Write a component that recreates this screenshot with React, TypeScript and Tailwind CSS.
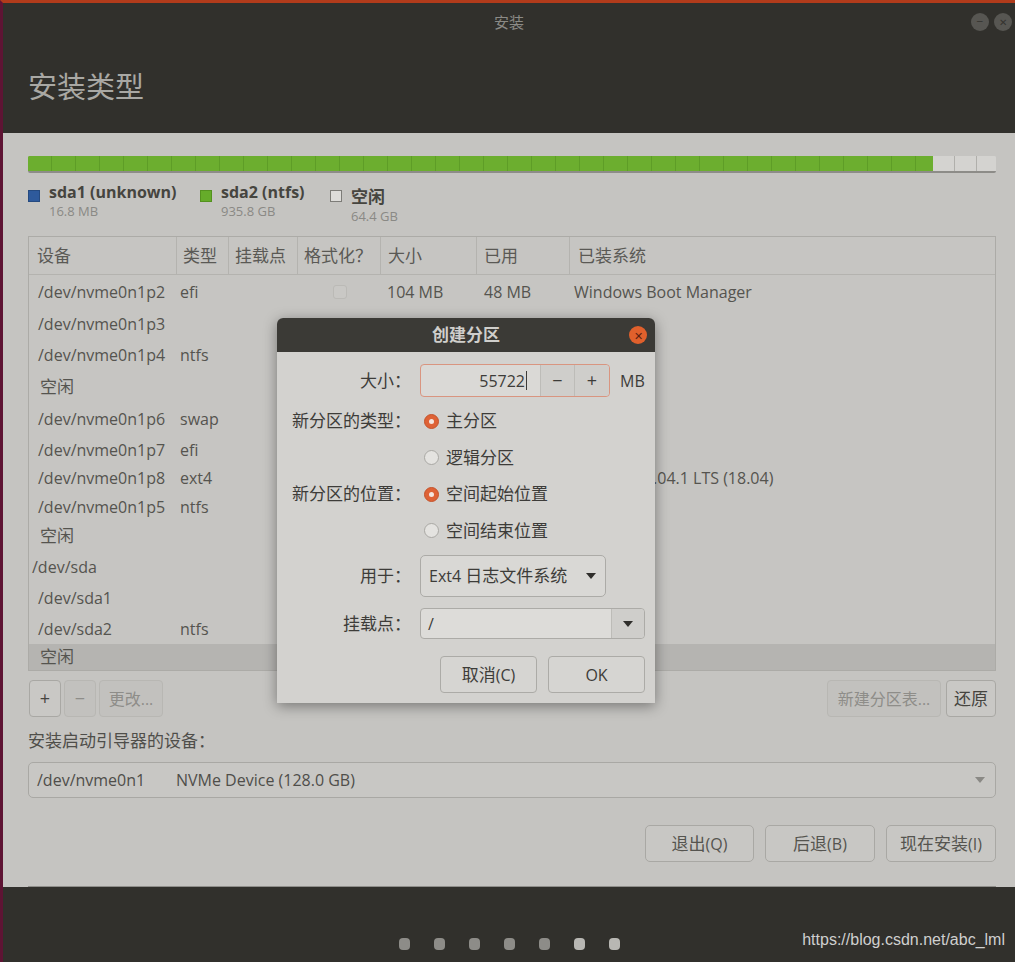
import React from 'react';

const font = "font-['Open_Sans','Noto_Sans_CJK_SC',sans-serif]";

interface PartRow {
  dev: string;
  type?: string;
  check?: boolean;
  size?: string;
  used?: string;
  sys?: string;
  h: string;
  top?: boolean;
  selected?: boolean;
}

const rows: PartRow[] = [
  { dev: '/dev/nvme0n1p2', type: 'efi', check: true, size: '104 MB', used: '48 MB', sys: 'Windows Boot Manager', h: 'h-[34px]' },
  { dev: '/dev/nvme0n1p3', h: 'h-[30px]' },
  { dev: '/dev/nvme0n1p4', type: 'ntfs', h: 'h-[31px]' },
  { dev: '空闲', h: 'h-[33px]' },
  { dev: '/dev/nvme0n1p6', type: 'swap', h: 'h-[32px]' },
  { dev: '/dev/nvme0n1p7', type: 'efi', h: 'h-[29px]' },
  { dev: '/dev/nvme0n1p8', type: 'ext4', sys: 'Ubuntu 18.04.1 LTS (18.04)', h: 'h-[28px]' },
  { dev: '/dev/nvme0n1p5', type: 'ntfs', h: 'h-[29px]' },
  { dev: '空闲', h: 'h-[30px]' },
  { dev: '/dev/sda', h: 'h-[31px]', top: true },
  { dev: '/dev/sda1', h: 'h-[31px]' },
  { dev: '/dev/sda2', type: 'ntfs', h: 'h-[31px]' },
  { dev: '空闲', h: 'h-[26px]', selected: true },
];

const cols = 'grid grid-cols-[148px_52px_69px_83px_96px_93px_1fr]';

function Arrow({ className }: { className?: string }) {
  return (
    <svg width="10" height="6" viewBox="0 0 10 6" className={className}>
      <path d="M0 0 L10 0 L5 6 Z" fill="currentColor" />
    </svg>
  );
}

function Radio({ checked }: { checked?: boolean }) {
  return checked ? (
    <div className="w-[15px] h-[15px] rounded-full bg-[#de6236] border border-[#c4532b] flex items-center justify-center">
      <div className="w-[5px] h-[5px] rounded-full bg-[#f3e6e0]" />
    </div>
  ) : (
    <div className="w-[15px] h-[15px] rounded-full bg-[#e4e3e0] border border-[#a9a8a4]" />
  );
}

function CreatePartitionDialog() {
  const label = 'w-[126px] pr-[2px] text-right text-[17px] text-[#3d3c39] shrink-0 whitespace-nowrap';
  return (
    <div className="absolute left-[274px] top-[315px] w-[378px] h-[385px] rounded-t-[6px] bg-[#d3d2cf] shadow-[0_3px_14px_rgba(0,0,0,0.4)] flex flex-col">
      <div className="h-[34px] rounded-t-[6px] bg-[#3b3a36] relative flex items-center justify-center">
        <span className="text-[17px] font-bold text-[#cfcecb]">创建分区</span>
        <div className="absolute right-[8px] top-[8px] w-[18px] h-[18px] rounded-full bg-[#e0602c] flex items-center justify-center text-[11px] leading-none text-[#5a2010]">✕</div>
      </div>
      <div className="flex flex-col pl-[10px] pr-[10px] pt-[12px]">
        <div className="h-[33px] flex items-center">
          <div className={label}>大小：</div>
          <div className="ml-[7px] w-[190px] h-[33px] rounded-[4px] border border-[#d99580] bg-[#dad9d6] flex">
            <div className="w-[119px] flex items-center justify-end pr-[13px] text-[16px] text-[#3d3c39]">
              55722<span className="ml-[1px] w-[1px] h-[19px] bg-[#3d3c39]" />
            </div>
            <div className="w-[34px] border-l border-[#bdbcb8] bg-[#cfcecb] flex items-center justify-center text-[18px] text-[#3d3c39]">−</div>
            <div className="flex-1 border-l border-[#bdbcb8] bg-[#cfcecb] rounded-r-[4px] flex items-center justify-center text-[18px] text-[#3d3c39]">+</div>
          </div>
          <div className="ml-[10px] text-[16px] text-[#3d3c39]">MB</div>
        </div>
        <div className="mt-[6px] h-[36px] flex items-center">
          <div className={label}>新分区的类型：</div>
          <div className="ml-[11px]"><Radio checked /></div>
          <span className="ml-[7px] text-[17px] text-[#3d3c39]">主分区</span>
        </div>
        <div className="h-[37px] flex items-center">
          <div className={label} />
          <div className="ml-[11px]"><Radio /></div>
          <span className="ml-[7px] text-[17px] text-[#3d3c39]">逻辑分区</span>
        </div>
        <div className="h-[36px] flex items-center">
          <div className={label}>新分区的位置：</div>
          <div className="ml-[11px]"><Radio checked /></div>
          <span className="ml-[7px] text-[17px] text-[#3d3c39]">空间起始位置</span>
        </div>
        <div className="h-[37px] flex items-center">
          <div className={label} />
          <div className="ml-[11px]"><Radio /></div>
          <span className="ml-[7px] text-[17px] text-[#3d3c39]">空间结束位置</span>
        </div>
        <div className="mt-[6px] h-[42px] flex items-center">
          <div className={label}>用于：</div>
          <div className="ml-[7px] w-[186px] h-[42px] rounded-[5px] border border-[#acaba7] bg-[#d9d8d5] flex items-center justify-between pl-[8px] pr-[9px]">
            <span className="text-[16px] text-[#3d3c39]">Ext4 <span className="text-[17px]">日志文件系统</span></span>
            <Arrow className="text-[#2f2e2b]" />
          </div>
        </div>
        <div className="mt-[11px] h-[31px] flex items-center">
          <div className={label}>挂载点：</div>
          <div className="ml-[7px] w-[225px] h-[31px] rounded-[4px] border border-[#acaba7] bg-[#dddcd9] flex">
            <div className="flex-1 flex items-center pl-[7px] text-[16px] text-[#3d3c39]">/</div>
            <div className="w-[33px] border-l border-[#bdbcb8] bg-[#cfcecb] rounded-r-[4px] flex items-center justify-center">
              <Arrow className="text-[#2f2e2b]" />
            </div>
          </div>
        </div>
        <div className="mt-[17px] h-[37px] flex justify-end gap-[11px]">
          <div className="w-[97px] rounded-[4px] border border-[#acaba7] bg-[#d6d5d2] flex items-center justify-center text-[16px] text-[#3d3c39]"><span className="text-[17px]">取消</span>(C)</div>
          <div className="w-[97px] rounded-[4px] border border-[#acaba7] bg-[#d6d5d2] flex items-center justify-center text-[16px] text-[#3d3c39]">OK</div>
        </div>
      </div>
    </div>
  );
}

export default function App() {
  return (
    <div className={`${font} relative w-[1015px] h-[962px] overflow-hidden bg-[#31302c] border-t-[3px] border-t-[#b13b1b] border-l-[3px] border-l-[#5e1434] flex flex-col`}>
      {/* header */}
      <div className="h-[130px] shrink-0 relative">
        <div className="h-[39px] flex items-center justify-center text-[15px] text-[#8b8a86]">安装</div>
        <div className="absolute right-[3px] top-[10px] flex gap-[5px]">
          <div className="w-[18px] h-[18px] rounded-full bg-[#575652] flex items-center justify-center text-[12px] leading-none text-[#34332f]">−</div>
          <div className="w-[18px] h-[18px] rounded-full bg-[#575652] flex items-center justify-center text-[10px] leading-none text-[#34332f]">✕</div>
        </div>
        <div className="pl-[25px] mt-[25px] text-[29px] leading-[40px] text-[#a9a8a4]">安装类型</div>
      </div>

      {/* main */}
      <div className="flex-1 bg-[#c5c4c1] pl-[25px] pr-[19px] pt-[23px] flex flex-col">
        <div className="h-[17px] flex rounded-[2px] overflow-hidden border-b-[2px] border-b-[#8d8c88]">
          <div className="w-[905px] bg-[#6cae2f] bg-[image:repeating-linear-gradient(90deg,#6cae2f_0px,#6cae2f_23px,#5e9d27_23px,#5e9d27_24px)]" />
          <div className="flex-1 bg-[#d4d3d0] bg-[image:repeating-linear-gradient(90deg,#d4d3d0_0px,#d4d3d0_21px,#b0afab_21px,#b0afab_22px)]" />
        </div>

        <div className="h-[51px] mt-[9px] flex items-start">
          <div className="w-[172px] flex gap-[9px]">
            <div className="mt-[8px] w-[12px] h-[12px] bg-[#2e5a9c] border border-[#254a80]" />
            <div className="flex flex-col">
              <span className="text-[16px] leading-[20px] font-bold text-[#46453f]">sda1 (unknown)</span>
              <span className="text-[13px] leading-[18px] text-[#8a8985]">16.8 MB</span>
            </div>
          </div>
          <div className="w-[130px] flex gap-[9px]">
            <div className="mt-[8px] w-[12px] h-[12px] bg-[#66ac2a] border border-[#54921f]" />
            <div className="flex flex-col">
              <span className="text-[16px] leading-[20px] font-bold text-[#46453f]">sda2 (ntfs)</span>
              <span className="text-[13px] leading-[18px] text-[#8a8985]">935.8 GB</span>
            </div>
          </div>
          <div className="flex gap-[9px]">
            <div className="mt-[8px] w-[12px] h-[12px] bg-[#dddcd9] border border-[#7d7c78]" />
            <div className="flex flex-col mt-[5px]">
              <span className="text-[17px] leading-[20px] font-bold text-[#46453f]">空闲</span>
              <span className="text-[13px] leading-[18px] text-[#8a8985]">64.4 GB</span>
            </div>
          </div>
        </div>

        {/* partition table */}
        <div className="mt-[3px] border border-[#acaba7] bg-[#c6c5c2]">
          <div className={`${cols} h-[38px] border-b border-[#b4b3af] text-[17px] text-[#5a5955]`}>
            <div className="flex items-center pl-[8px] border-r border-[#b4b3af]">设备</div>
            <div className="flex items-center pl-[6px] border-r border-[#b4b3af]">类型</div>
            <div className="flex items-center pl-[6px] border-r border-[#b4b3af]">挂载点</div>
            <div className="flex items-center pl-[6px] border-r border-[#b4b3af] whitespace-nowrap">格式化？</div>
            <div className="flex items-center pl-[7px] border-r border-[#b4b3af]">大小</div>
            <div className="flex items-center pl-[7px] border-r border-[#b4b3af]">已用</div>
            <div className="flex items-center pl-[8px]">已装系统</div>
          </div>
          {rows.map((r, i) => (
            <div key={i} className={`${cols} ${r.h} text-[16px] text-[#55544f] ${r.selected ? 'bg-[#b5b4b1]' : ''}`}>
              <div className={`flex items-center whitespace-nowrap ${r.top ? 'pl-[3px]' : r.dev === '空闲' ? 'pl-[11px] text-[17px]' : 'pl-[9px]'}`}>{r.dev}</div>
              <div className="flex items-center pl-[3px]">{r.type}</div>
              <div />
              <div className="flex items-center justify-center">
                {r.check && <div className="w-[14px] h-[14px] rounded-[3px] border border-[#bbbab6] bg-[#c9c8c5]" />}
              </div>
              <div className="flex items-center pl-[6px] whitespace-nowrap">{r.size}</div>
              <div className="flex items-center pl-[7px] whitespace-nowrap">{r.used}</div>
              <div className="flex items-center pl-[4px] whitespace-nowrap">{r.sys}</div>
            </div>
          ))}
        </div>

        <div className="mt-[9px] h-[37px] flex text-[16px]">
          <div className="w-[32px] ml-[1px] rounded-[4px] border border-[#a9a8a4] bg-[#c9c8c5] flex items-center justify-center text-[18px] text-[#45443f]">+</div>
          <div className="w-[32px] ml-[3px] rounded-[4px] border border-[#b8b7b3] bg-[#c2c1be] flex items-center justify-center text-[18px] text-[#8e8d89]">−</div>
          <div className="w-[64px] ml-[3px] rounded-[4px] border border-[#b8b7b3] bg-[#c2c1be] flex items-center justify-center text-[#8e8d89]">更改...</div>
          <div className="flex-1" />
          <div className="w-[114px] rounded-[4px] border border-[#b8b7b3] bg-[#c2c1be] flex items-center justify-center text-[#8e8d89]">新建分区表...</div>
          <div className="w-[50px] ml-[5px] rounded-[4px] border border-[#a9a8a4] bg-[#c9c8c5] flex items-center justify-center text-[17px] text-[#45443f]">还原</div>
        </div>

        <div className="mt-[14px] h-[20px] flex items-center text-[17px] text-[#4f4e4a]">安装启动引导器的设备：</div>

        <div className="mt-[11px] h-[36px] rounded-[5px] border border-[#a9a8a4] bg-[#c8c7c4] flex items-center pl-[8px] pr-[10px] text-[16px] text-[#4f4e4a]">
          <span className="w-[139px]">/dev/nvme0n1</span>
          <span>NVMe Device (128.0 GB)</span>
          <div className="flex-1" />
          <Arrow className="text-[#8a8985]" />
        </div>

        <div className="mt-[27px] h-[37px] flex justify-end gap-[11px] text-[16px] text-[#55544f]">
          <div className="w-[109px] rounded-[5px] border border-[#a9a8a4] bg-[#c8c7c4] flex items-center justify-center"><span className="text-[17px]">退出</span>(Q)</div>
          <div className="w-[110px] rounded-[5px] border border-[#a9a8a4] bg-[#c8c7c4] flex items-center justify-center"><span className="text-[17px]">后退</span>(B)</div>
          <div className="w-[110px] rounded-[5px] border border-[#a9a8a4] bg-[#c8c7c4] flex items-center justify-center"><span className="text-[17px]">现在安装</span>(I)</div>
        </div>
        <div className="h-[25px] border-b border-[#8f8e8a]" />
      </div>

      {/* footer */}
      <div className="h-[75px] shrink-0 flex justify-center pt-[51px] gap-[24px]">
        {[0, 1, 2, 3, 4, 5, 6].map((d) => (
          <div key={d} className={`w-[11px] h-[12px] rounded-[4px] ${d > 4 ? 'bg-[#b8b7b3]' : 'bg-[#8d8c88]'}`} />
        ))}
      </div>

      <div className="absolute right-[10px] bottom-[10px] font-['Liberation_Sans',sans-serif] text-[16px] text-[#cfcfcf]">https://blog.csdn.net/abc_lml</div>

      <CreatePartitionDialog />
    </div>
  );
}
